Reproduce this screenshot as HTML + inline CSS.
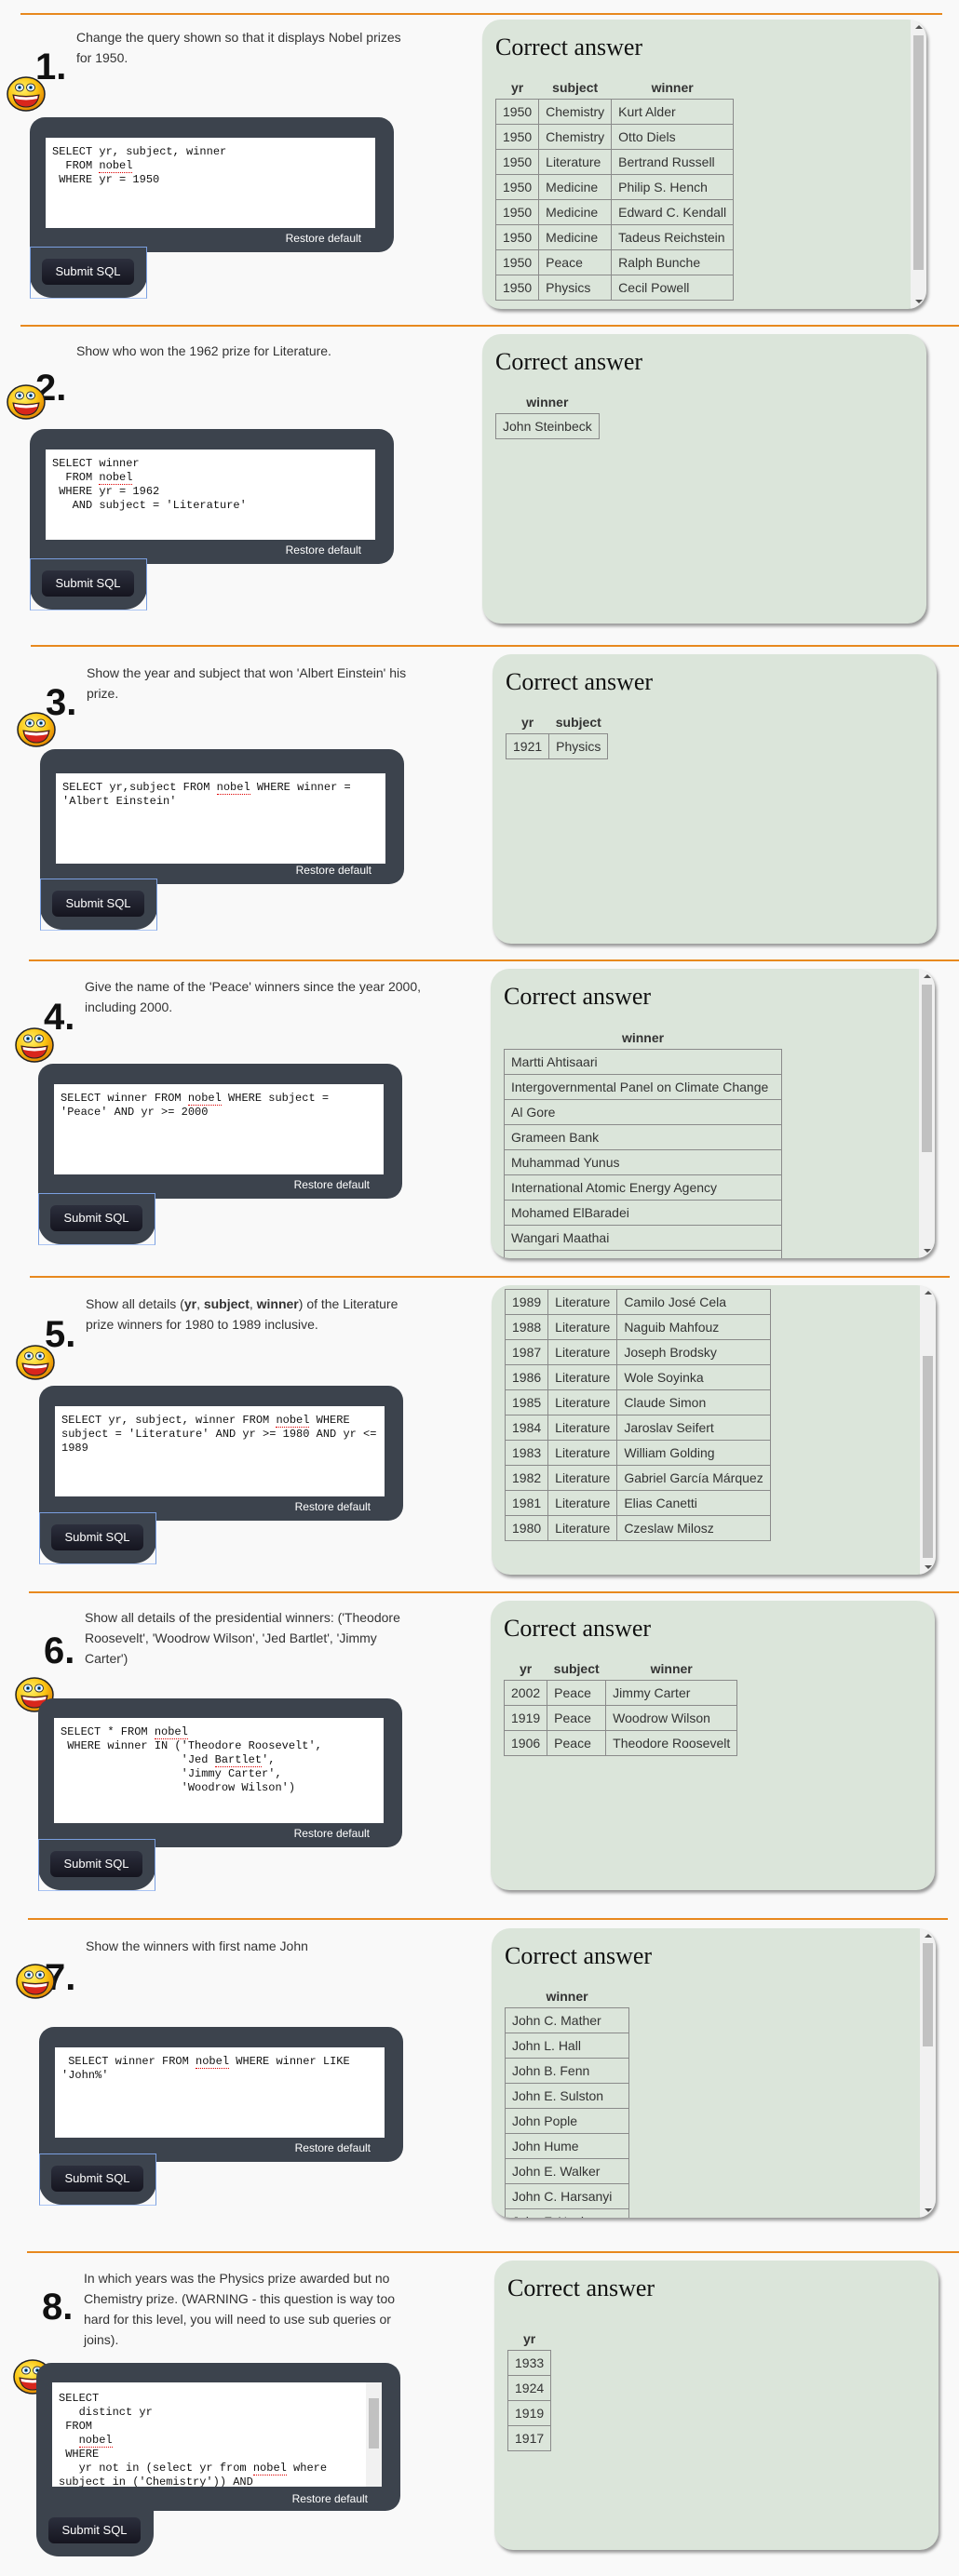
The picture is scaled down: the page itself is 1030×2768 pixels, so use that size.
<!DOCTYPE html>
<html><head><meta charset="utf-8">
<style>
*{margin:0;padding:0;box-sizing:border-box}
body{width:1030px;height:2768px;background:#f9f9f9;font-family:"Liberation Sans",Arial,sans-serif;color:#333;position:relative;overflow:hidden}
.sec{position:absolute;left:0;width:1030px;height:340px}
.line{position:absolute;top:0;height:2px;background:#e8891e}
.q{position:absolute;left:82px;top:17px;width:365px;font-size:14px;line-height:22px;color:#333}
.num{position:absolute;left:38px;font:bold 40px/40px "Liberation Sans",Arial,sans-serif;color:#111}
.sm{position:absolute;left:7px;width:42px;height:38px}
.ed{position:absolute;left:32px;top:112px;width:391px;height:145px;background:#3c434d;border-radius:16px}
.ta{position:absolute;left:49px;top:134px;width:354px;height:97px;background:#fff;font:12px/15px "Liberation Mono",monospace;color:#111;padding:8px 7px;white-space:pre;overflow:hidden}
.ta u{text-decoration:none;border-bottom:1px dotted #d00}
.rs{position:absolute;left:300px;width:88px;text-align:right;top:235px;font-size:12px;color:#fff}
.tab{position:absolute;left:32px;top:240px;width:126px;height:66px;background:#3c434d;border-radius:0 0 24px 24px}
.ol{position:absolute;left:32px;top:251px;width:126px;height:56px;border:1px solid #7a9fe0;border-bottom-color:#a9c3f2}
.btn{position:absolute;left:45px;top:264px;width:99px;height:28px;border-radius:6px;background:linear-gradient(#2c2f3d,#15151f);color:#fff;font-size:13px;line-height:28px;text-align:center}
.pn{position:absolute;left:518px;width:477px;height:311px;background:#dbe5da;border-radius:20px;box-shadow:2px 3px 3px #999;overflow:hidden}
.pn h2{position:absolute;left:14px;top:15px;font:26px/30px "Liberation Serif",serif;color:#111;font-weight:normal}
.pn table{position:absolute;left:14px;border-collapse:collapse;font-size:14px;color:#333}
.pn th{height:24px;font-weight:bold;padding:0 7px;color:#333}
.pn td{height:27px;border:1px solid #8a8a8a;padding:0 7px;white-space:nowrap}
.sb{position:absolute;right:0;top:0;width:17px;height:100%;background:#f1f1f1}
.sb .th{position:absolute;left:3px;width:11px;background:#c1c1c1}
.sb .up,.sb .dn{position:absolute;left:5px;width:0;height:0;border-left:4px solid transparent;border-right:4px solid transparent}
.sb .up{top:6px;border-bottom:4px solid #555}
.sb .dn{bottom:6px;border-top:4px solid #555}
</style></head><body>

<svg width="0" height="0" style="position:absolute">
<defs>
<radialGradient id="g" cx="40%" cy="35%" r="70%"><stop offset="0" stop-color="#fff36a"/><stop offset="0.55" stop-color="#fbc514"/><stop offset="1" stop-color="#e07f00"/></radialGradient>
<symbol id="smile" viewBox="0 0 42 38">
<ellipse cx="21" cy="19" rx="20" ry="18" fill="url(#g)" stroke="#222" stroke-width="1.5"/>
<ellipse cx="14" cy="12" rx="4.5" ry="4" fill="#fff" stroke="#333"/><circle cx="14" cy="12" r="2.2" fill="#3a8fd0"/><circle cx="14" cy="12" r="1" fill="#000"/>
<ellipse cx="26" cy="12" rx="4.5" ry="4" fill="#fff" stroke="#333"/><circle cx="26" cy="12" r="2.2" fill="#3a8fd0"/><circle cx="26" cy="12" r="1" fill="#000"/>
<path d="M7 20 Q21 23 35 20 Q33 33 21 33 Q9 33 7 20Z" fill="#d9261c" stroke="#222"/>
<path d="M8.5 21 Q21 24 33.5 21 L33 24 Q21 27 9 24Z" fill="#fff"/>
</symbol>
</defs></svg>

<!-- 1 -->
<div class="sec" style="top:14px">
<div class="line" style="left:22px;width:990px"></div>
<div class="q" style="top:15px">Change the query shown so that it displays Nobel prizes for 1950.</div>
<div class="num" style="top:38px">1.</div>
<svg class="sm" style="top:68px"><use href="#smile"/></svg>
<div class="ed"></div>
<div class="ta">SELECT yr, subject, winner
  FROM <u>nobel</u>
 WHERE yr = 1950</div>
<div class="rs">Restore default</div>
<div class="tab"></div><div class="ol"></div><div class="btn">Submit SQL</div>
<div class="pn" style="top:7px">
<h2>Correct answer</h2>
<table style="top:61px"><tr><th>yr</th><th>subject</th><th>winner</th></tr>
<tr><td>1950</td><td>Chemistry</td><td>Kurt Alder</td></tr>
<tr><td>1950</td><td>Chemistry</td><td>Otto Diels</td></tr>
<tr><td>1950</td><td>Literature</td><td>Bertrand Russell</td></tr>
<tr><td>1950</td><td>Medicine</td><td>Philip S. Hench</td></tr>
<tr><td>1950</td><td>Medicine</td><td>Edward C. Kendall</td></tr>
<tr><td>1950</td><td>Medicine</td><td>Tadeus Reichstein</td></tr>
<tr><td>1950</td><td>Peace</td><td>Ralph Bunche</td></tr>
<tr><td>1950</td><td>Physics</td><td>Cecil Powell</td></tr></table>
<div class="sb"><div class="up"></div><div class="th" style="top:17px;height:252px"></div><div class="dn"></div></div>
</div>
</div>

<!-- 2 -->
<div class="sec" style="top:349px">
<div class="line" style="left:22px;width:1008px"></div>
<div class="q" style="top:17px">Show who won the 1962 prize for Literature.</div>
<div class="num" style="top:48px">2.</div>
<svg class="sm" style="top:64px"><use href="#smile"/></svg>
<div class="ed"></div>
<div class="ta">SELECT winner
  FROM <u>nobel</u>
 WHERE yr = 1962
   AND subject = 'Literature'</div>
<div class="rs">Restore default</div>
<div class="tab"></div><div class="ol"></div><div class="btn">Submit SQL</div>
<div class="pn" style="top:10px">
<h2>Correct answer</h2>
<table style="top:61px"><tr><th>winner</th></tr>
<tr><td>John Steinbeck</td></tr></table>
</div>
</div>

<!-- 3 -->
<div class="sec" style="top:693px;left:11px">
<div class="line" style="left:22px;width:1000px"></div>
<div class="q" style="top:19px">Show the year and subject that won 'Albert Einstein' his prize.</div>
<div class="num" style="top:42px">3.</div>
<svg class="sm" style="top:72px"><use href="#smile"/></svg>
<div class="ed"></div>
<div class="ta" style="top:138px">SELECT yr,subject FROM <u>nobel</u> WHERE winner =
'Albert Einstein'</div>
<div class="rs">Restore default</div>
<div class="tab"></div><div class="ol"></div><div class="btn">Submit SQL</div>
<div class="pn" style="top:10px">
<h2>Correct answer</h2>
<table style="top:61px"><tr><th>yr</th><th>subject</th></tr>
<tr><td>1921</td><td>Physics</td></tr></table>
</div>
</div>

<!-- 4 -->
<div class="sec" style="top:1031px;left:9px">
<div class="line" style="left:22px;width:1000px"></div>
<div class="q" style="top:18px">Give the name of the 'Peace' winners since the year 2000, including 2000.</div>
<div class="num" style="top:42px">4.</div>
<svg class="sm" style="top:73px"><use href="#smile"/></svg>
<div class="ed"></div>
<div class="ta">SELECT winner FROM <u>nobel</u> WHERE subject =
'Peace' AND yr &gt;= 2000</div>
<div class="rs">Restore default</div>
<div class="tab"></div><div class="ol"></div><div class="btn">Submit SQL</div>
<div class="pn" style="top:10px">
<h2>Correct answer</h2>
<table style="top:62px;width:299px"><tr><th>winner</th></tr>
<tr><td>Martti Ahtisaari</td></tr>
<tr><td>Intergovernmental Panel on Climate Change</td></tr>
<tr><td>Al Gore</td></tr>
<tr><td>Grameen Bank</td></tr>
<tr><td>Muhammad Yunus</td></tr>
<tr><td>International Atomic Energy Agency</td></tr>
<tr><td>Mohamed ElBaradei</td></tr>
<tr><td>Wangari Maathai</td></tr>
<tr><td>Shirin Ebadi</td></tr></table>
<div class="sb"><div class="up"></div><div class="th" style="top:17px;height:180px"></div><div class="dn"></div></div>
</div>
</div>

<!-- 5 -->
<div class="sec" style="top:1371px;left:10px">
<div class="line" style="left:22px;width:988px"></div>
<div class="q" style="top:19px">Show all details (<b>yr</b>, <b>subject</b>, <b>winner</b>) of the Literature prize winners for 1980 to 1989 inclusive.</div>
<div class="num" style="top:43px">5.</div>
<svg class="sm" style="top:74px"><use href="#smile"/></svg>
<div class="ed" style="top:118px"></div>
<div class="ta" style="top:140px">SELECT yr, subject, winner FROM <u>nobel</u> WHERE
subject = 'Literature' AND yr &gt;= 1980 AND yr &lt;=
1989</div>
<div class="rs" style="top:241px">Restore default</div>
<div class="tab" style="top:243px"></div><div class="ol" style="top:254px"></div><div class="btn" style="top:267px">Submit SQL</div>
<div class="pn" style="top:10px">
<table style="top:4px"><tr><td>1989</td><td>Literature</td><td>Camilo José Cela</td></tr>
<tr><td>1988</td><td>Literature</td><td>Naguib Mahfouz</td></tr>
<tr><td>1987</td><td>Literature</td><td>Joseph Brodsky</td></tr>
<tr><td>1986</td><td>Literature</td><td>Wole Soyinka</td></tr>
<tr><td>1985</td><td>Literature</td><td>Claude Simon</td></tr>
<tr><td>1984</td><td>Literature</td><td>Jaroslav Seifert</td></tr>
<tr><td>1983</td><td>Literature</td><td>William Golding</td></tr>
<tr><td>1982</td><td>Literature</td><td>Gabriel García Márquez</td></tr>
<tr><td>1981</td><td>Literature</td><td>Elias Canetti</td></tr>
<tr><td>1980</td><td>Literature</td><td>Czeslaw Milosz</td></tr></table>
<div class="sb"><div class="up"></div><div class="th" style="top:76px;height:217px"></div><div class="dn"></div></div>
</div>
</div>

<!-- 6 -->
<div class="sec" style="top:1710px;left:9px">
<div class="line" style="left:22px;width:1000px"></div>
<div class="q" style="top:17px;width:345px">Show all details of the presidential winners: ('Theodore Roosevelt', 'Woodrow Wilson', 'Jed Bartlet', 'Jimmy Carter')</div>
<div class="num" style="top:44px">6.</div>
<svg class="sm" style="top:92px"><use href="#smile"/></svg>
<div class="ed" style="top:115px;height:160px"></div>
<div class="ta" style="top:136px;height:113px">SELECT * FROM <u>nobel</u>
 WHERE winner IN ('Theodore Roosevelt',
                  'Jed <u>Bartlet</u>',
                  'Jimmy Carter',
                  'Woodrow Wilson')</div>
<div class="rs" style="top:253px">Restore default</div>
<div class="tab" style="top:255px"></div><div class="ol" style="top:266px"></div><div class="btn" style="top:279px">Submit SQL</div>
<div class="pn" style="top:10px">
<h2>Correct answer</h2>
<table style="top:61px"><tr><th>yr</th><th>subject</th><th>winner</th></tr>
<tr><td>2002</td><td>Peace</td><td>Jimmy Carter</td></tr>
<tr><td>1919</td><td>Peace</td><td>Woodrow Wilson</td></tr>
<tr><td>1906</td><td>Peace</td><td>Theodore Roosevelt</td></tr></table>
</div>
</div>

<!-- 7 -->
<div class="sec" style="top:2061px;left:10px">
<div class="line" style="left:20px;width:988px"></div>
<div class="q" style="top:19px">Show the winners with first name John</div>
<div class="num" style="top:44px">7.</div>
<svg class="sm" style="top:49px"><use href="#smile"/></svg>
<div class="ed" style="top:117px"></div>
<div class="ta" style="top:139px"> SELECT winner FROM <u>nobel</u> WHERE winner LIKE
'John%'</div>
<div class="rs" style="top:240px">Restore default</div>
<div class="tab" style="top:242px"></div><div class="ol" style="top:253px"></div><div class="btn" style="top:266px">Submit SQL</div>
<div class="pn" style="top:11px">
<h2>Correct answer</h2>
<table style="top:61px;width:134px"><tr><th>winner</th></tr>
<tr><td>John C. Mather</td></tr>
<tr><td>John L. Hall</td></tr>
<tr><td>John B. Fenn</td></tr>
<tr><td>John E. Sulston</td></tr>
<tr><td>John Pople</td></tr>
<tr><td>John Hume</td></tr>
<tr><td>John E. Walker</td></tr>
<tr><td>John C. Harsanyi</td></tr>
<tr><td>John F. Nash</td></tr></table>
<div class="sb"><div class="up"></div><div class="th" style="top:16px;height:111px"></div><div class="dn"></div></div>
</div>
</div>

<!-- 8 -->
<div class="sec" style="top:2419px;left:7px;height:349px">
<div class="line" style="left:22px;width:1008px"></div>
<div class="q" style="top:18px;left:83px">In which years was the Physics prize awarded but no Chemistry prize. (WARNING - this question is way too hard for this level, you will need to use sub queries or joins).</div>
<div class="num" style="top:40px">8.</div>
<svg class="sm" style="top:116px;left:7px"><use href="#smile"/></svg>
<div class="ed" style="top:120px;height:159px"></div>
<div class="ta" style="top:141px;height:112px;padding-top:10px">SELECT
   distinct yr
 FROM
   <u>nobel</u>
 WHERE
   yr not in (select yr from <u>nobel</u> where
subject in ('Chemistry')) AND</div>
<div style="position:absolute;left:386px;top:141px;width:17px;height:112px;background:#f1f1f1"><div style="position:absolute;left:3px;top:17px;width:11px;height:54px;background:#c1c1c1"></div></div>
<div class="rs" style="top:259px">Restore default</div>
<div class="tab" style="top:260px;height:68px"></div><div class="btn" style="top:286px">Submit SQL</div>
<div class="pn" style="top:10px;left:524px">
<h2>Correct answer</h2>
<table style="top:72px"><tr><th>yr</th></tr>
<tr><td>1933</td></tr><tr><td>1924</td></tr><tr><td>1919</td></tr><tr><td>1917</td></tr></table>
</div>
</div>

</body></html>
